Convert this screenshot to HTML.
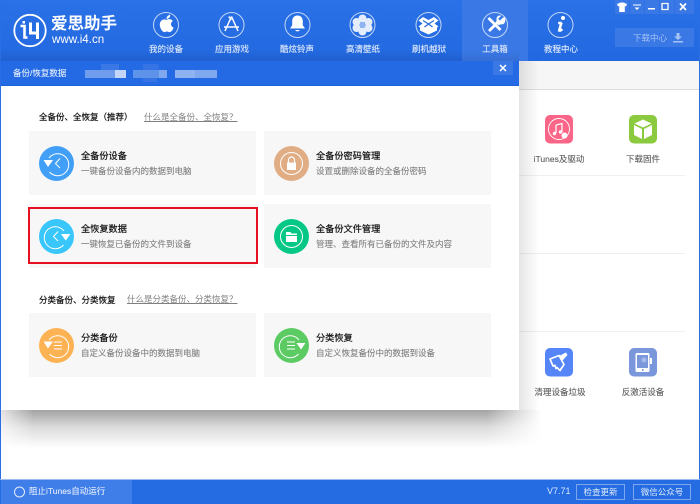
<!DOCTYPE html>
<html><head><meta charset="utf-8"><style>
*{margin:0;padding:0;box-sizing:border-box}
html,body{width:700px;height:504px;overflow:hidden;background:#fff;font-family:"Liberation Sans","Noto Sans CJK SC",sans-serif}
.a{position:absolute}
#root{position:relative;width:700px;height:504px;overflow:hidden;background:#fff}
.nl{position:absolute;top:43px;width:66px;text-align:center;font-size:8.5px;line-height:12px;color:#d6e4fa;-webkit-text-stroke:.15px #d6e4fa}
.c{position:absolute;width:227px;height:64px;background:#f7f7f7}
.t{position:absolute;left:52px;top:19px;font-size:9.2px;line-height:13px;color:#111;white-space:nowrap;-webkit-text-stroke:.2px #111}
.s{position:absolute;left:52px;top:34px;font-size:8.5px;line-height:13px;color:#808080;white-space:nowrap;-webkit-text-stroke:.1px #808080}
.c svg{position:absolute;left:10px;top:15px}
.h{position:absolute;font-size:8.5px;line-height:12px;color:#111;white-space:nowrap;-webkit-text-stroke:.2px #111}
.q{position:absolute;font-size:8.5px;line-height:11px;color:#808080;text-decoration:underline;white-space:nowrap}
.l{position:absolute;font-size:8.5px;line-height:12px;color:#5c5c5c;width:70px;text-align:center;white-space:nowrap;-webkit-text-stroke:.1px #5c5c5c}
.w{position:absolute;top:0;width:14px;height:14px;background:#3a78e6}
.m{position:absolute;height:8px}
</style></head><body><div id="root">
<div class="a" style="left:0;top:0;width:700px;height:61px;background:linear-gradient(#2a70e6,#2268e0)"></div>
<div class="a" style="left:462px;top:0;width:66px;height:61px;background:#3a78e6"></div>
<svg class="a" style="left:13px;top:13px" width="35" height="35" viewBox="0 0 35 35"><circle cx="17" cy="17.500" r="15.700" fill="none" stroke="#fff" stroke-width="1.800"/><path d="M7.500 13h4v11.500h3" fill="none" stroke="#fff" stroke-width="2.600"/><path d="M9.500 8h2.500v2.500H9.500z" fill="#fff"/><path d="M17.500 9.500v10.500h8M24.500 9.500v16.500" fill="none" stroke="#fff" stroke-width="3"/></svg>
<div class="a" style="left:51px;top:14px;font-size:16.500px;line-height:20px;font-weight:bold;color:#fff;white-space:nowrap">爱思助手</div>
<div class="a" style="left:52px;top:33px;font-size:11.600px;line-height:13px;color:#fff;white-space:nowrap">www.i4.cn</div>
<svg class="a" style="left:0;top:0" width="700" height="50" viewBox="0 0 700 50">
<g fill="none" stroke="#c2d7f7" stroke-width="1"><circle cx="166" cy="25" r="12.500"/><circle cx="231.500" cy="25" r="12.500"/><circle cx="297.500" cy="25" r="12.500"/><circle cx="362.500" cy="25" r="12.500"/><circle cx="428.500" cy="25" r="12.500"/><circle cx="495" cy="25" r="12.500"/><circle cx="560.500" cy="25" r="12.500"/></g>
<path d="M166.500 20c1.800-1.200 4.600-1.300 6.300 1-2.700 1.800-2.300 5.500.9 6.600-1.100 3-3.200 5.200-5.100 4.400-1.300-.6-2.300-.6-3.400 0-2.800 1.100-6.500-5.400-5.100-9.400 1.100-3 4.300-4 6.400-2.600z M166.500 19c0-2.200 1.500-3.900 3.700-4.200.2 2.300-1.500 4.100-3.700 4.200z" fill="#fff"/>
<path d="M231.500 16.500l-6.500 14.500M231.500 16.500l6.500 14.500M224 27h15M228.800 16.500l2.500 3.500" fill="none" stroke="#fff" stroke-width="1.500"/>
<path d="M297.500 15.500c3.700 0 5.300 2.700 5.300 5.800v4l2.200 3.200h-15l2.200-3.200v-4c0-3.100 1.600-5.800 5.300-5.800z M295.300 30h4.400c0 1.800-4.400 1.800-4.400 0z" fill="#fff"/>
<g fill="#e3edfc"><circle cx="362.500" cy="18.500" r="4"/><circle cx="362.500" cy="31.500" r="4"/><circle cx="356.500" cy="22" r="4"/><circle cx="368.500" cy="22" r="4"/><circle cx="356.500" cy="28" r="4"/><circle cx="368.500" cy="28" r="4"/></g><circle cx="362.500" cy="25" r="3" fill="#8fb4f1"/>
<path d="M423 17l5.500 3 5.500-3 4.500 3.500-4 3 4 3-1.500 1v3l-8.500 4-8.500-4v-3l-1.500-1 4-3-4-3z" fill="#fff"/><path d="M423 20.500l5.500 3.500 5.500-3.500M428.500 24l-4 3M428.500 24l4 3" stroke="#2a6ce2" stroke-width="1.200" fill="none"/>
<path d="M488.500 18l12 12M489 31l9-9" fill="none" stroke="#fff" stroke-width="2.800"/><path d="M503 17.500l-3 3-1.800-1.800 3-3c-3-1-5.500 1.500-4.500 4.500l-1 2 3 3 2-1c3 1 5.500-1.700 4.300-6.700z" fill="#fff"/>
<path d="M561.500 22.500l-2.300 8c.9.300 2-.2 3-1.400M558.200 23h3.300" fill="none" stroke="#fff" stroke-width="2.500"/><circle cx="563" cy="18" r="2" fill="#fff"/>
</svg>
<div class="nl" style="left:133px">我的设备</div><div class="nl" style="left:199px">应用游戏</div><div class="nl" style="left:264px">酷炫铃声</div><div class="nl" style="left:330px">高清壁纸</div><div class="nl" style="left:396px">刷机越狱</div><div class="nl" style="left:462px">工具箱</div><div class="nl" style="left:528px">教程中心</div>
<div class="w" style="left:615px"></div><div class="w" style="left:630px"></div><div class="w" style="left:645px"></div><div class="w" style="left:660px"></div><div class="w" style="left:675px;width:19px"></div>
<svg class="a" style="left:615px;top:0" width="80" height="14" viewBox="0 0 80 14"><path d="M2 4l3.500-1.500h3L12 4l-1 2.500-1.200-.5v6H4.200V6L3 6.500z" fill="#fff"/><path d="M18 4.500h8v1h-8zM19.500 7.500h5L22 10z" fill="#fff"/><path d="M33 8h7v1.500h-7z" fill="#fff"/><path d="M47 3.500h6v6h-6z" fill="none" stroke="#fff" stroke-width="1.300"/><path d="M65 3.500l6 6.500M71 3.500l-6 6.500" stroke="#fff" stroke-width="1.700" fill="none"/></svg>
<div class="a" style="left:615px;top:28px;width:79px;height:19px;background:#3a78e6"></div>
<div class="a" style="left:633px;top:32px;font-size:8.500px;line-height:12px;color:#a5c4f3;white-space:nowrap">下载中心</div>
<svg class="a" style="left:672px;top:33px" width="12" height="10" viewBox="0 0 12 10"><path d="M4.500 0h3v3.500H10L6 7 2 3.500h2.500zM1 8h10v1.500H1z" fill="#a5c4f3"/></svg>

<div class="a" style="left:519px;top:61px;width:180px;height:29px;background:#f6f6f6;border-bottom:1px solid #dedede"></div>
<div class="a" style="left:519px;top:175px;width:166px;height:1px;background:#f0f0f0"></div>
<div class="a" style="left:519px;top:253px;width:166px;height:1px;background:#f0f0f0"></div>
<div class="a" style="left:519px;top:331px;width:166px;height:1px;background:#f0f0f0"></div>
<svg class="a" style="left:545px;top:115px" width="29" height="29" viewBox="0 0 29 29"><rect width="28" height="28.500" rx="5" fill="#fb6587"/><circle cx="14" cy="14" r="10.500" fill="none" stroke="#fff" stroke-width=".9"/><path d="M11 10l6-1.500v8.500M11 10v8" fill="none" stroke="#fff" stroke-width="1.200"/><circle cx="9.500" cy="18.500" r="1.700" fill="#fff"/><circle cx="15.500" cy="17" r="1.700" fill="#fff"/><circle cx="19.500" cy="20.500" r="3" fill="#fff"/></svg>
<svg class="a" style="left:629px;top:115px" width="29" height="29" viewBox="0 0 29 29"><rect width="28" height="28.500" rx="5" fill="#8bc93e"/><path d="M14 4.500l8.500 4-8.500 4-8.500-4zM5 10l8 4v10l-8-4zM23 10l-8 4v10l8-4z" fill="#fff"/></svg>
<svg class="a" style="left:545px;top:348px" width="29" height="29" viewBox="0 0 29 29"><rect width="28" height="28.500" rx="5" fill="#5585f7"/><path d="M5 11l9-3.500 5 9-4 6-3-3-1 1-1-3-2 .5z" fill="none" stroke="#fff" stroke-width="1.700" stroke-linejoin="round"/><path d="M14 8l7-3.500 1.500 2.500-5 5.500" fill="#fff"/></svg>
<svg class="a" style="left:629px;top:348px" width="29" height="29" viewBox="0 0 29 29"><rect width="28" height="28.500" rx="5" fill="#7a97dc"/><rect x="6.500" y="5" width="14" height="19" rx="1.500" fill="#fff"/><rect x="8" y="7" width="11" height="13" fill="#7a97dc"/><circle cx="15" cy="12" r="2.500" fill="#a6bbec"/><rect x="21" y="10" width="2" height="6" fill="#fff"/><rect x="13" y="21" width="1.500" height="2" fill="#7a97dc"/></svg>
<div class="l" style="left:524px;top:153px">iTunes及驱动</div><div class="l" style="left:608px;top:153px">下载固件</div>
<div class="l" style="left:525px;top:386px">清理设备垃圾</div><div class="l" style="left:608px;top:386px">反激活设备</div>

<div class="a" style="left:1px;top:410px;width:540px;height:38px;background:linear-gradient(rgba(0,0,0,.36),rgba(0,0,0,.14) 45%,rgba(0,0,0,0));-webkit-mask-image:linear-gradient(90deg,rgba(0,0,0,.3),#000 6%,#000 90%,rgba(0,0,0,0))"></div>
<div class="a" style="left:519px;top:61px;width:20px;height:349px;background:linear-gradient(90deg,rgba(0,0,0,.1),rgba(0,0,0,0))"></div>
<div class="a" style="left:1px;top:50px;width:518px;height:11px;background:linear-gradient(rgba(0,0,0,0),rgba(0,0,0,.08))"></div>
<div class="a" style="left:1px;top:61px;width:518px;height:349px;background:#fff;overflow:hidden">
<div class="a" style="left:-1px;top:0;width:519px;height:25px;background:#236ae4;border-bottom:1px solid #1e62d8"></div>
</div>
<div class="a" style="left:13px;top:67px;font-size:8.500px;line-height:13px;color:#e3edfc;white-space:nowrap;-webkit-text-stroke:.1px #e3edfc">备份/恢复数据</div>
<div class="m" style="left:85px;top:70px;width:30px;background:#6f9deb"></div><div class="m" style="left:115px;top:70px;width:11px;background:#c3d6f7"></div><div class="m" style="left:101px;top:64px;width:18px;height:6px;background:#3a78e6"></div>
<div class="m" style="left:133px;top:70px;width:26px;background:#5f93e9"></div><div class="m" style="left:159px;top:70px;width:8px;background:#7fa8ee"></div><div class="m" style="left:143px;top:64px;width:16px;height:6px;background:#3673e5"></div><div class="m" style="left:143px;top:78px;width:14px;height:4px;background:#3673e5"></div>
<div class="m" style="left:175px;top:70px;width:20px;background:#8fb3f0"></div><div class="m" style="left:195px;top:70px;width:22px;background:#7fa8ee"></div>
<div class="a" style="left:493px;top:61px;width:20px;height:14px;background:#3a78e6"></div>
<svg class="a" style="left:499px;top:64px" width="8" height="8" viewBox="0 0 8 8"><path d="M1 1l6 6M7 1L1 7" stroke="#fff" stroke-width="1.500"/></svg>

<div class="h" style="left:39px;top:111px">全备份、全恢复（推荐）</div>
<div class="q" style="left:144px;top:112px">什么是全备份、全恢复？</div>
<div class="h" style="left:39px;top:294px">分类备份、分类恢复</div>
<div class="q" style="left:127px;top:294px">什么是分类备份、分类恢复？</div>

<div class="c" style="left:29px;top:131px"><svg width="36" height="36" viewBox="0 0 36 36"><circle cx="17.500" cy="17.500" r="17.500" fill="#419ff8"/><path d="M10 12a11 11 0 1 1 .5 14" fill="none" stroke="#fff" stroke-width="1"/><path d="M4.500 14h9.500L9 21z" fill="#fff"/><path d="M21 12.500l-4.500 5 4.500 4.500" fill="none" stroke="#fff" stroke-width="1"/></svg><div class="t">全备份设备</div><div class="s">一键备份设备内的数据到电脑</div></div>
<div class="c" style="left:264px;top:131px"><svg width="36" height="36" viewBox="0 0 36 36"><circle cx="17.500" cy="17.500" r="17.500" fill="#e0ad85"/><circle cx="17.500" cy="17.500" r="11" fill="none" stroke="#fff" stroke-width="1"/><rect x="13" y="16.500" width="9" height="7.500" fill="#fff"/><path d="M14.500 17v-3a3 3 0 0 1 6 0v3" fill="none" stroke="#fff" stroke-width="1.200"/></svg><div class="t">全备份密码管理</div><div class="s">设置或删除设备的全备份密码</div></div>
<div class="c" style="left:29px;top:204px"><svg width="36" height="36" viewBox="0 0 36 36"><circle cx="17.500" cy="17.500" r="17.500" fill="#38c6fb"/><path d="M25 12a11 11 0 1 0-.5 14" fill="none" stroke="#fff" stroke-width="1"/><path d="M22 15h9.500l-4.800 6.500z" fill="#fff"/><path d="M19 12.500l-4.500 5 4.500 4.500" fill="none" stroke="#fff" stroke-width="1"/></svg><div class="t">全恢复数据</div><div class="s">一键恢复已备份的文件到设备</div></div>
<div class="c" style="left:264px;top:204px"><svg width="36" height="36" viewBox="0 0 36 36"><circle cx="17.500" cy="17.500" r="17.500" fill="#05c887"/><circle cx="17.500" cy="17.500" r="11" fill="none" stroke="#fff" stroke-width="1"/><path d="M12 13h4.500l1 1.500H23v1.500H12z M12 17h11v6H12z" fill="#fff"/></svg><div class="t">全备份文件管理</div><div class="s">管理、查看所有已备份的文件及内容</div></div>
<div class="c" style="left:29px;top:313px"><svg width="36" height="36" viewBox="0 0 36 36"><circle cx="17.500" cy="17.500" r="17.500" fill="#fdb254"/><path d="M10 12a11 11 0 1 1 .5 14" fill="none" stroke="#fff" stroke-width="1"/><path d="M4.500 13.500h9.500L9 20.500z" fill="#fff"/><path d="M15 14h8M15 17.500h8M15 21h8" stroke="#fff" stroke-width="1"/></svg><div class="t">分类备份</div><div class="s">自定义备份设备中的数据到电脑</div></div>
<div class="c" style="left:264px;top:313px"><svg width="36" height="36" viewBox="0 0 36 36"><circle cx="17.500" cy="17.500" r="17.500" fill="#5ccb63"/><path d="M25 12a11 11 0 1 0-.5 14" fill="none" stroke="#fff" stroke-width="1"/><path d="M22.500 15h9l-4.500 6.500z" fill="#fff"/><path d="M13 14h8M13 17.500h8M13 21h8" stroke="#fff" stroke-width="1"/></svg><div class="t">分类恢复</div><div class="s">自定义恢复备份中的数据到设备</div></div>
<div class="a" style="left:28px;top:207px;width:230px;height:57px;border:2px solid #e8101f"></div>

<div class="a" style="left:0;top:0;width:1px;height:504px;background:#2a6de4"></div>
<div class="a" style="left:699px;top:0;width:1px;height:504px;background:#2a6de4"></div>
<div class="a" style="left:0;top:479px;width:700px;height:25px;background:#256ce3;border-top:1px solid #9dbdf2"></div>
<div class="a" style="left:1px;top:480px;width:131px;height:24px;background:#3f7de8"></div>
<svg class="a" style="left:13px;top:485px" width="14" height="14" viewBox="0 0 14 14"><circle cx="6.500" cy="7" r="5" fill="none" stroke="#e3edfc" stroke-width="1"/></svg>
<div class="a" style="left:29px;top:485px;font-size:8.500px;line-height:13px;color:#e3edfc;white-space:nowrap;-webkit-text-stroke:.1px #e3edfc">阻止iTunes自动运行</div>
<div class="a" style="left:547px;top:485px;font-size:9px;line-height:13px;color:#dbe7fb;white-space:nowrap">V7.71</div>
<div class="a" style="left:576px;top:484px;width:49px;height:16px;border:1px solid #7ea6ee;font-size:8.500px;line-height:14px;text-align:center;color:#e3edfc">检查更新</div>
<div class="a" style="left:633px;top:484px;width:58px;height:16px;border:1px solid #7ea6ee;font-size:8.500px;line-height:14px;text-align:center;color:#e3edfc">微信公众号</div>
</div></body></html>
